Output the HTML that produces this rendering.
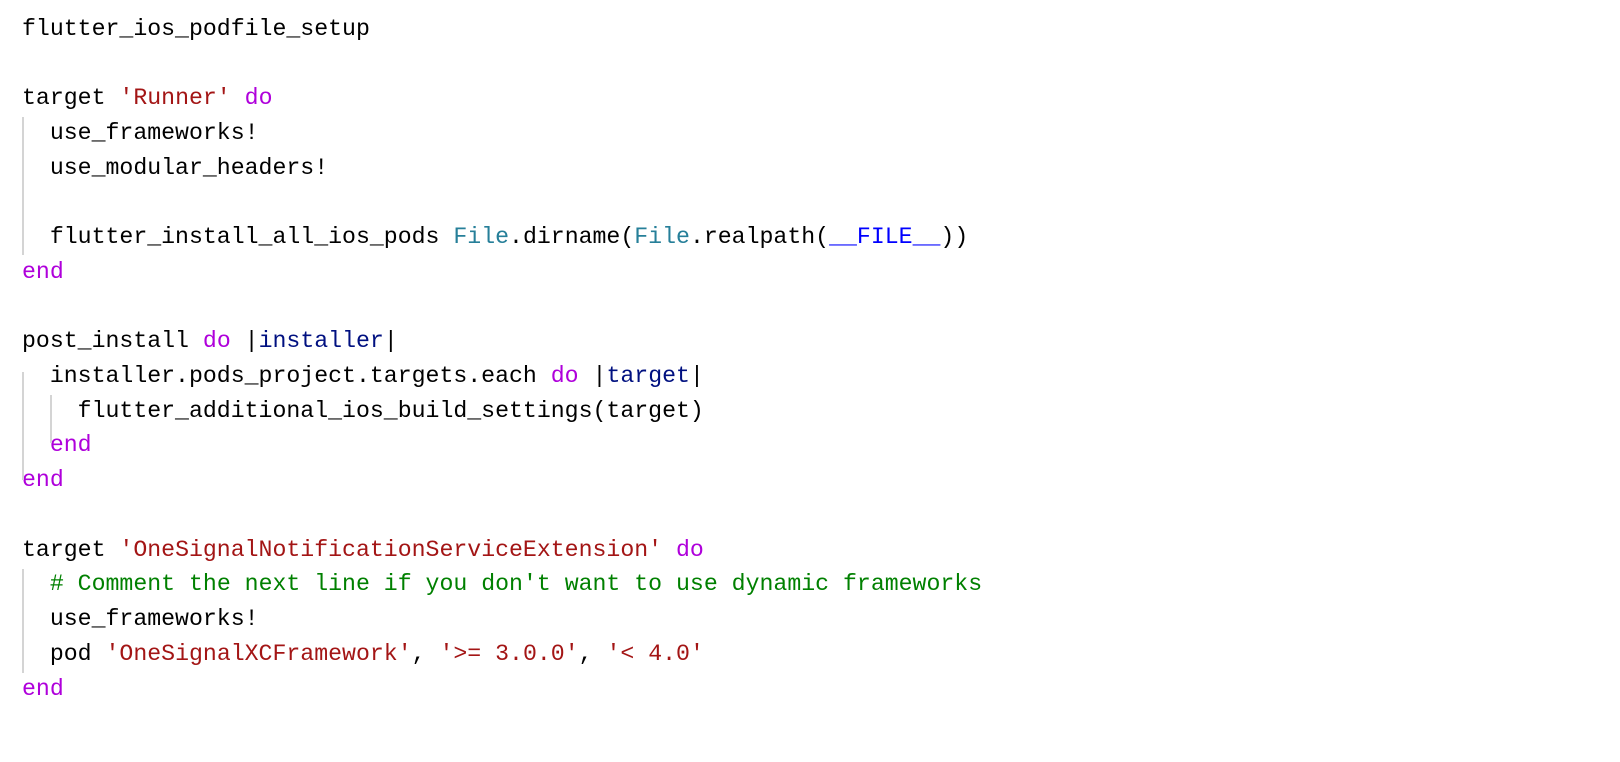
<!DOCTYPE html>
<html><head><meta charset="utf-8"><style>
html,body{margin:0;padding:0;background:#fff;width:1620px;height:762px;overflow:hidden}
.l{position:absolute;left:22px;height:34.7px;line-height:34.7px;font-family:"Liberation Mono",monospace;font-size:23.2px;color:#000;white-space:pre}
.k{color:#af00db}.s{color:#a31515}.t{color:#267f99}.b{color:#0000ff}.v{color:#001080}.c{color:#008000}
.g{position:absolute;width:2px;background:#d4d4d4}
</style></head><body>
<div class="l" style="top:12px">flutter_ios_podfile_setup</div>
<div class="l" style="top:81px">target <span class="s">'Runner'</span> <span class="k">do</span></div>
<div class="l" style="top:116px">  use_frameworks!</div>
<div class="l" style="top:151px">  use_modular_headers!</div>
<div class="l" style="top:220px">  flutter_install_all_ios_pods <span class="t">File</span>.dirname(<span class="t">File</span>.realpath(<span class="b">__FILE__</span>))</div>
<div class="l" style="top:255px"><span class="k">end</span></div>
<div class="l" style="top:324px">post_install <span class="k">do</span> |<span class="v">installer</span>|</div>
<div class="l" style="top:359px">  installer.pods_project.targets.each <span class="k">do</span> |<span class="v">target</span>|</div>
<div class="l" style="top:394px">    flutter_additional_ios_build_settings(target)</div>
<div class="l" style="top:428px">  <span class="k">end</span></div>
<div class="l" style="top:463px"><span class="k">end</span></div>
<div class="l" style="top:533px">target <span class="s">'OneSignalNotificationServiceExtension'</span> <span class="k">do</span></div>
<div class="l" style="top:567px">  <span class="c"># Comment the next line if you don't want to use dynamic frameworks</span></div>
<div class="l" style="top:602px">  use_frameworks!</div>
<div class="l" style="top:637px">  pod <span class="s">'OneSignalXCFramework'</span>, <span class="s">'&gt;= 3.0.0'</span>, <span class="s">'&lt; 4.0'</span></div>
<div class="l" style="top:672px"><span class="k">end</span></div>
<div class="g" style="left:22px;top:117px;height:138px"></div>
<div class="g" style="left:22px;top:372px;height:108px"></div>
<div class="g" style="left:50px;top:395px;height:48px"></div>
<div class="g" style="left:22px;top:569px;height:104px"></div>
</body></html>
